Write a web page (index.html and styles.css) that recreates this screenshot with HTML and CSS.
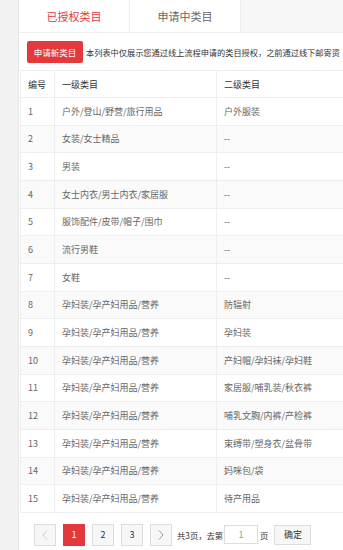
FILE: index.html
```html
<!DOCTYPE html>
<html lang="zh-CN">
<head>
    <meta charset="UTF-8">
    <meta name="viewport" content="width=device-width, initial-scale=1.0">
    <title>类目管理</title>
    <link rel="stylesheet" href="styles.css">
</head>
<body>
    <div class="main">
        <div class="tabs">
            <div class="tab active">已授权类目</div>
            <div class="tab">申请中类目</div>
        </div>

        <div class="toolbar">
            <button class="apply-btn" type="button">申请新类目</button>
            <span class="tip">本列表中仅展示您通过线上流程申请的类目授权，之前通过线下邮寄资</span>
        </div>

        <table class="cate-table">
            <thead>
                <tr><th class="col-no">编号</th><th class="col-a">一级类目</th><th class="col-b">二级类目</th></tr>
            </thead>
            <tbody>
                <tr><td>1</td><td>户外/登山/野营/旅行用品</td><td>户外服装</td></tr>
                <tr><td>2</td><td>女装/女士精品</td><td>--</td></tr>
                <tr><td>3</td><td>男装</td><td>--</td></tr>
                <tr><td>4</td><td>女士内衣/男士内衣/家居服</td><td>--</td></tr>
                <tr><td>5</td><td>服饰配件/皮带/帽子/围巾</td><td>--</td></tr>
                <tr><td>6</td><td>流行男鞋</td><td>--</td></tr>
                <tr><td>7</td><td>女鞋</td><td>--</td></tr>
                <tr><td>8</td><td>孕妇装/孕产妇用品/营养</td><td>防辐射</td></tr>
                <tr><td>9</td><td>孕妇装/孕产妇用品/营养</td><td>孕妇装</td></tr>
                <tr><td>10</td><td>孕妇装/孕产妇用品/营养</td><td>产妇帽/孕妇袜/孕妇鞋</td></tr>
                <tr><td>11</td><td>孕妇装/孕产妇用品/营养</td><td>家居服/哺乳装/秋衣裤</td></tr>
                <tr><td>12</td><td>孕妇装/孕产妇用品/营养</td><td>哺乳文胸/内裤/产检裤</td></tr>
                <tr><td>13</td><td>孕妇装/孕产妇用品/营养</td><td>束缚带/塑身衣/盆骨带</td></tr>
                <tr><td>14</td><td>孕妇装/孕产妇用品/营养</td><td>妈咪包/袋</td></tr>
                <tr><td>15</td><td>孕妇装/孕产妇用品/营养</td><td>待产用品</td></tr>
            </tbody>
        </table>

        <div class="pager">
            <span class="page-btn disabled">
                <svg width="8" height="10" viewBox="0 0 8 10"><polyline points="6,0.5 2,5 6,9.5" fill="none" stroke="currentColor" stroke-width="1"/></svg>
            </span>
            <span class="page-btn current">1</span>
            <span class="page-btn">2</span>
            <span class="page-btn">3</span>
            <span class="page-btn arrow">
                <svg width="8" height="10" viewBox="0 0 8 10"><polyline points="2,0.5 6,5 2,9.5" fill="none" stroke="currentColor" stroke-width="1"/></svg>
            </span>
            <span class="pager-text">共3页，去第</span>
            <input class="pager-input" type="text" value="1">
            <span class="pager-text">页</span>
            <button class="pager-ok" type="button">确定</button>
        </div>
    </div>
</body>
</html>
```

FILE: styles.css
```css
body {
    margin: 0;
    padding: 0;
    background: #f2f2f2;
    font-family: "Noto Sans CJK SC", "Microsoft YaHei", sans-serif;
    width: 343px;
    height: 550px;
    overflow: hidden;
}
.main {
    margin-left: 18px;
    height: 550px;
    background: #ffffff;
    border-left: 1px solid #e6e6e6;
    overflow: hidden;
}

/* Tabs */
.tabs {
    display: flex;
    height: 33px;
    background: #f7f7f7;
    border-bottom: 1px solid #eeeeee;
    box-sizing: border-box;
}
.tab {
    width: 110px;
    background: #ffffff;
    border-right: 1px solid #eeeeee;
    text-align: center;
    line-height: 32px;
    font-size: 11px;
    color: #666666;
}
.tab.active {
    color: #e4393c;
}

/* Toolbar */
.toolbar {
    display: flex;
    align-items: center;
    padding: 8px 0 0 8px;
    white-space: nowrap;
}
.apply-btn {
    flex: none;
    width: 56px;
    height: 22px;
    padding: 0;
    border: none;
    border-radius: 2px;
    background: #e4393c;
    color: #ffffff;
    font-family: inherit;
    font-size: 8.5px;
}
.tip {
    margin-left: 3px;
    font-size: 8.2px;
    color: #333333;
}

/* Table */
.cate-table {
    margin: 7px 0 0 1px;
    border-collapse: collapse;
    table-layout: fixed;
    width: 358px;
    font-size: 9px;
}
.cate-table th,
.cate-table td {
    height: 27.67px;
    padding: 0 0 0 7px;
    border: 1px solid #eeeeee;
    text-align: left;
    white-space: nowrap;
    box-sizing: border-box;
}
.cate-table th {
    height: 27px;
    font-weight: normal;
    color: #333333;
}
.cate-table td {
    color: #666666;
}
.cate-table tbody tr:nth-child(even) {
    background: #fafafa;
}
.col-no {
    width: 34px;
}
.col-a {
    width: 162px;
}
.col-b {
    width: 162px;
}

/* Pager */
.pager {
    display: flex;
    align-items: center;
    padding: 11px 0 0 15px;
    font-size: 9px;
}
.page-btn {
    display: flex;
    align-items: center;
    justify-content: center;
    width: 22px;
    height: 22px;
    margin-right: 7px;
    box-sizing: border-box;
    border: 1px solid #dddddd;
    background: #f7f7f7;
    color: #333333;
}
.page-btn.current {
    background: #e4393c;
    border-color: #e4393c;
    color: #ffffff;
}
.page-btn.disabled {
    color: #cccccc;
}
.page-btn.arrow {
    color: #999999;
    margin-right: 5px;
}
.pager-text {
    font-size: 8.3px;
    color: #333333;
}
.pager-input {
    width: 34px;
    height: 19px;
    margin: 0 2px 0 1px;
    padding: 0;
    box-sizing: border-box;
    border: 1px solid #dddddd;
    text-align: center;
    font-family: inherit;
    font-size: 9px;
    color: #999999;
    outline: none;
}
.pager-ok {
    width: 37px;
    height: 20px;
    margin-left: 6px;
    padding: 0;
    border: 1px solid #dddddd;
    background: #f7f7f7;
    color: #333333;
    font-family: inherit;
    font-size: 9px;
}
```
